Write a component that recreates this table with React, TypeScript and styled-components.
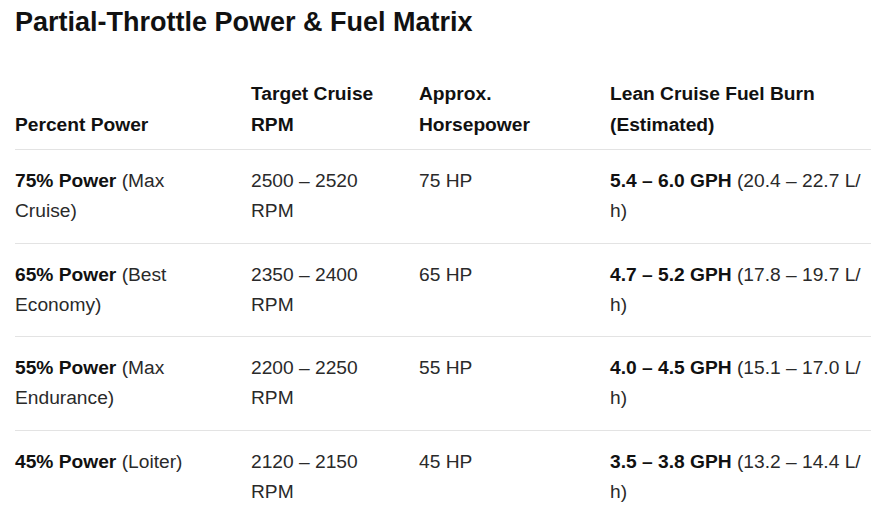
import React from "react";
import styled, { createGlobalStyle } from "styled-components";

const Global = createGlobalStyle`
  html, body { margin: 0; padding: 0; background: #ffffff; }
  body { font-family: "Liberation Sans", Arial, sans-serif; }
`;

const Page = styled.div`
  padding: 6px 22px 0 15px;
  color: #2a2a2a;
`;

const Title = styled.h2`
  margin: 0 0 31px;
  font-size: 27px;
  line-height: 32.4px;
  font-weight: 700;
  color: #111;
`;

const Table = styled.table`
  width: 856px;
  table-layout: fixed;
  border-collapse: collapse;
  font-size: 19.2px;
  line-height: 30.3px;
`;

const HeadCell = styled.th<{ $last?: boolean }>`
  text-align: left;
  vertical-align: bottom;
  font-weight: 700;
  color: #111;
  padding: 10px ${(p) => (p.$last ? "0" : "24px")} 9px 0;
  border-bottom: 1px solid #e3e3e3;
`;

const Row = styled.tr<{ $last?: boolean }>`
  border-bottom: ${(p) => (p.$last ? "none" : "1px solid #e3e3e3")};
`;

const Cell = styled.td<{ $last?: boolean }>`
  vertical-align: top;
  padding: 16px ${(p) => (p.$last ? "0" : "24px")} 16px 0;
`;

const Strong = styled.strong`
  font-weight: 700;
  color: #111;
`;

const rows = [
  { pct: "75% Power", note: "(Max Cruise)", rpm: "2500 – 2520 RPM", hp: "75 HP", gph: "5.4 – 6.0 GPH", l: "(20.4 – 22.7 L/" },
  { pct: "65% Power", note: "(Best Economy)", rpm: "2350 – 2400 RPM", hp: "65 HP", gph: "4.7 – 5.2 GPH", l: "(17.8 – 19.7 L/" },
  { pct: "55% Power", note: "(Max Endurance)", rpm: "2200 – 2250 RPM", hp: "55 HP", gph: "4.0 – 4.5 GPH", l: "(15.1 – 17.0 L/" },
  { pct: "45% Power", note: "(Loiter)", rpm: "2120 – 2150 RPM", hp: "45 HP", gph: "3.5 – 3.8 GPH", l: "(13.2 – 14.4 L/" },
];

export default function App() {
  return (
    <Page>
      <Global />
      <Title>Partial-Throttle Power &amp; Fuel Matrix</Title>
      <Table>
        <colgroup>
          <col style={{ width: 236 }} />
          <col style={{ width: 168 }} />
          <col style={{ width: 191 }} />
          <col />
        </colgroup>
        <thead>
          <tr>
            <HeadCell>Percent Power</HeadCell>
            <HeadCell>Target Cruise RPM</HeadCell>
            <HeadCell>Approx. Horsepower</HeadCell>
            <HeadCell $last>Lean Cruise Fuel Burn (Estimated)</HeadCell>
          </tr>
        </thead>
        <tbody>
          {rows.map((r, i) => (
            <Row key={r.pct} $last={i === rows.length - 1}>
              <Cell>
                <Strong>{r.pct}</Strong> {r.note}
              </Cell>
              <Cell>{r.rpm}</Cell>
              <Cell>{r.hp}</Cell>
              <Cell $last>
                <Strong>{r.gph}</Strong> {r.l}
                <wbr />
                h)
              </Cell>
            </Row>
          ))}
        </tbody>
      </Table>
    </Page>
  );
}
